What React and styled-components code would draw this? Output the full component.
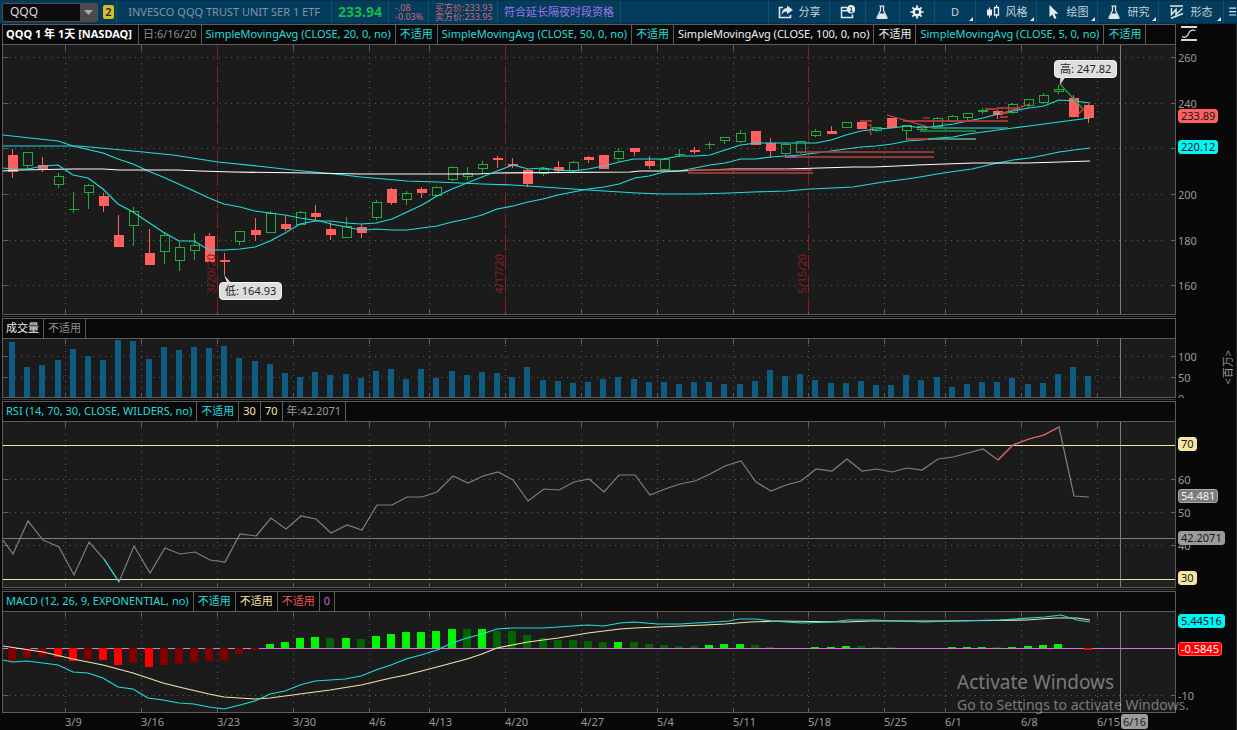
import React from "react";
import styled, { createGlobalStyle } from "styled-components";

const GlobalStyle = createGlobalStyle`
  * { box-sizing: border-box; }
  body {
    margin: 0;
    background: #080808;
    color: #9a9a9a;
    font-family: "Noto Sans", "Noto Sans CJK SC", sans-serif;
    font-size: 11px;
    line-height: 16px;
  }
  button, input { font: inherit; color: inherit; margin: 0; padding: 0; border: 0; background: none; }
`;

const PLOT_LEFT = 3;
const PLOT_WIDTH = 1172;
const BAR_COUNT = 72;
const barX = (i) => Math.round(13.15 + 15.155 * i);
const pct = (x) => `${((x - PLOT_LEFT) / PLOT_WIDTH) * 100}%`;

const WEEKS = [
  [65, "3/9"], [141, "3/16"], [217, "3/23"], [293, "3/30"], [369, "4/6"],
  [429, "4/13"], [505, "4/20"], [581, "4/27"], [657, "5/4"], [733, "5/11"],
  [808, "5/18"], [884, "5/25"], [945, "6/1"], [1021, "6/8"], [1097, "6/15"],
];
const CURSOR_X = 1120;

/* direction, high, body top, body bottom, low */
const CANDLES = [
  ["d", 149, 155, 172, 177], ["u", 152, 152, 165, 168], ["d", 157, 165, 169, 171],
  ["u", 173, 176, 184, 187], ["u", 192, 209, 209, 212], ["u", 184, 185, 192, 208],
  ["d", 193, 196, 206, 211], ["d", 215, 235, 247, 247], ["u", 207, 211, 225, 245],
  ["d", 229, 253, 265, 265], ["u", 232, 235, 251, 263], ["u", 242, 247, 260, 270],
  ["u", 233, 245, 250, 259], ["d", 233, 236, 262, 262], ["d", 253, 260, 262, 274],
  ["u", 231, 231, 241, 244], ["d", 218, 230, 235, 240], ["u", 211, 213, 232, 232],
  ["d", 216, 224, 229, 230], ["u", 211, 212, 224, 224], ["d", 205, 213, 217, 220],
  ["d", 222, 229, 235, 239], ["u", 217, 226, 237, 237], ["d", 224, 227, 233, 237],
  ["u", 200, 202, 217, 219], ["d", 188, 189, 203, 204], ["u", 191, 193, 199, 204],
  ["d", 187, 189, 193, 197], ["u", 186, 187, 195, 196], ["u", 166, 167, 179, 180],
  ["u", 167, 173, 176, 179], ["u", 161, 164, 168, 173], ["d", 156, 158, 160, 167],
  ["d", 158, 164, 166, 167], ["d", 169, 170, 184, 186], ["u", 167, 169, 173, 175],
  ["d", 161, 167, 171, 172], ["u", 161, 162, 170, 172], ["d", 156, 157, 160, 162],
  ["d", 155, 155, 169, 169], ["u", 148, 151, 158, 160], ["d", 148, 148, 152, 155],
  ["d", 156, 161, 166, 168], ["u", 158, 159, 169, 170], ["u", 149, 154, 154, 156],
  ["d", 147, 150, 152, 153], ["u", 142, 144, 144, 148], ["u", 137, 137, 140, 143],
  ["u", 130, 133, 141, 142], ["d", 131, 131, 145, 145], ["d", 138, 143, 151, 157],
  ["u", 143, 144, 153, 157], ["u", 141, 141, 152, 153], ["u", 129, 131, 135, 136],
  ["d", 126, 131, 134, 134], ["u", 122, 122, 127, 127], ["d", 122, 122, 129, 129],
  ["u", 127, 127, 130, 131], ["d", 118, 118, 128, 128], ["u", 125, 125, 130, 139],
  ["u", 126, 126, 129, 129], ["u", 117, 118, 126, 126], ["u", 115, 116, 121, 121],
  ["u", 113, 113, 117, 120], ["u", 108, 110, 111, 113], ["d", 110, 111, 115, 118],
  ["u", 103, 104, 112, 113], ["u", 99, 99, 105, 107], ["u", 93, 95, 102, 103],
  ["u", 85, 89, 91, 93], ["d", 95, 98, 117, 117], ["d", 104, 105, 118, 122],
];

const SMA20 = "3,135 30,138 58,141 73,146 103,153 118,159 133,164 148,171 163,177 194,191 209,198 224,204 240,207 255,211 270,213 285,215 300,218 320,221 331,224 346,227 361,230 376,229 392,230 407,230 422,228 437,226 452,222 467,219 482,215 497,209 513,206 528,202 543,199 558,195 573,192 588,189 604,187 619,184 635,178 649,176 664,172 679,171 695,168 710,165 725,163 741,159 756,159 770,157 786,156 801,155 816,153 831,151 846,149 861,147 876,146 892,144 907,141 922,140 938,138 953,137 968,134 983,132 998,130 1013,128 1029,126 1044,124 1059,122 1074,120 1090,118";
const SMA50 = "3,146 77,146 90,147 133,151 173,155 218,162 257,166 293,170 335,174 361,177 407,181 437,182 482,184 513,185 543,187 573,189 604,191 637,193 663,194 697,194 730,193 753,192 787,191 810,189 833,188 853,187 883,182 907,179 920,177 937,174 957,171 972,169 993,164 1013,160 1030,158 1045,155 1059,152 1074,150 1090,148";
const SMA100 = "3,171 20,170 73,169 87,169 103,169 120,170 177,170 200,171 233,172 310,173 360,174 477,174 497,173 630,172 640,171 680,171 733,169 787,169 820,168 853,167 873,167 897,166 917,165 973,163 1027,163 1060,162 1090,161";
const SMA5 = "3,168 13,169 28,169 43,166 58,165 73,175 88,178 103,189 118,204 133,212 148,222 163,232 179,241 194,241 209,250 224,250 240,249 255,247 270,241 285,233 300,224 315,221 331,221 346,223 361,224 376,223 392,219 407,212 422,205 437,196 452,189 467,183 482,177 497,171 513,165 528,169 543,168 558,170 573,171 588,169 604,166 619,162 634,159 649,159 664,159 679,156 695,156 710,155 725,150 741,145 756,143 816,143 831,140 846,135 861,131 876,129 892,128 907,126 922,128 938,126 953,124 968,121 983,118 998,114 1013,111 1029,108 1044,106 1059,100 1074,101 1090,103";

const VOLUME_TOPS = [
  342, 367, 365, 360, 349, 356, 360, 340, 341, 359, 347, 350, 347, 348, 346, 358,
  361, 364, 373, 377, 372, 375, 374, 378, 371, 369, 379, 369, 378, 371, 375, 372,
  373, 377, 367, 380, 381, 383, 382, 379, 377, 379, 382, 382, 384, 382, 382, 384,
  384, 381, 370, 376, 374, 380, 383, 383, 381, 385, 385, 375, 380, 377, 387, 384,
  382, 382, 378, 384, 383, 374, 367, 376,
];

const RSI = [
  554, 521, 540, 547, 575, 542, 559, 582, 546, 573, 548, 554, 552, 560, 562, 534,
  536, 518, 529, 516, 519, 533, 525, 530, 505, 505, 497, 497, 492, 476, 483, 476,
  472, 480, 501, 489, 490, 482, 479, 492, 475, 475, 495, 489, 484, 481, 474, 466,
  461, 482, 491, 485, 481, 469, 471, 459, 471, 469, 472, 468, 470, 459, 457, 453,
  449, 460, 445, 439, 435, 427, 496, 497,
];
const rsiPoints = (from, to) =>
  RSI.slice(from, to + 1).map((y, k) => `${barX(from + k)},${y}`).join(" ");

/* histogram end and whether the bar is growing */
const HISTOGRAM = [
  [661, 0], [658, 0], [657, 0], [657, 1], [661, 1], [659, 0], [660, 1], [665, 1],
  [663, 0], [667, 1], [665, 0], [664, 0], [662, 0], [661, 0], [660, 0], [654, 0],
  [650, 0], [644, 1], [642, 1], [638, 1], [637, 1], [638, 0], [638, 1], [639, 0],
  [636, 1], [634, 1], [632, 1], [632, 1], [631, 1], [629, 1], [629, 0], [629, 1],
  [631, 0], [631, 0], [635, 0], [638, 0], [640, 0], [640, 0], [641, 0], [642, 0],
  [642, 1], [642, 0], [644, 0], [645, 0], [646, 0], [646, 0], [645, 1], [644, 1],
  [644, 1], [645, 0], [647, 0], [648, 0], [648, 0], [647, 1], [647, 1], [646, 1],
  [646, 0], [647, 0], [647, 0], [648, 0], [648, 0], [648, 0], [647, 1], [647, 1],
  [647, 1], [647, 0], [647, 1], [646, 1], [645, 1], [644, 1], [648, 0], [650, 1],
];
const histColor = ([y, growing]) =>
  y > 648 ? (growing ? "#f00" : "#800000") : growing ? "#00f500" : "#006400";

const MACD = "3,660 12,662 27,661 43,663 58,665 73,672 88,673 103,678 118,687 133,689 148,698 163,700 179,703 194,704 209,707 224,709 240,705 255,701 270,694 285,691 300,685 315,681 330,680 345,679 361,676 376,670 391,665 406,659 421,655 437,650 452,643 467,638 482,634 497,629 512,628 543,628 573,626 588,625 604,626 620,623 634,622 658,624 680,624 695,623 715,622 729,621 739,619 756,619 772,621 802,623 833,622 847,620 873,620 925,622 948,621 1000,620 1045,617 1061,615 1077,620 1090,622";
const SIGNAL = "3,646 43,652 73,659 103,665 133,673 163,683 179,687 209,694 224,697 255,699 270,698 300,694 315,692 330,690 361,685 391,678 406,675 437,667 467,659 482,654 497,648 512,645 528,642 558,638 588,633 604,631 620,629 634,628 658,627 705,625 725,624 750,622 778,621 845,622 873,621 948,621 1027,620 1055,618 1077,618 1090,620";

/* ---------- toolbar ---------- */

const Toolbar = styled.header`
  display: flex;
  height: 24px;
  background: #033c5c;
  border-top: 1px solid #05324b;
  border-bottom: 1px solid #05324b;
  color: #c5d3da;
`;
const SymbolBox = styled.div`
  display: flex;
  align-items: center;
  gap: 5px;
  width: 117px;
  padding-left: 2px;
  border-right: 1px solid #1a4f6c;
`;
const Combo = styled.div`
  display: flex;
  width: 96px;
  height: 19px;
  border: 1px solid #4d4f50;
  border-radius: 2px;
  background: #0c0c0c;
  color: #dcdcdc;
  font-size: 12px;
`;
const SymbolInput = styled.input`
  flex: 1;
  min-width: 0;
  padding-left: 7px;
  outline: 0;
`;
const ComboButton = styled.button`
  display: grid;
  place-items: center;
  width: 17px;
  background: #4b4b4b;
`;
const LinkBadge = styled.button`
  width: 11px;
  height: 14px;
  border-radius: 2px;
  background: #d9bd22;
  color: #222;
  font-size: 11px;
  font-weight: 600;
  line-height: 14px;
`;
const Quote = styled.div`
  display: flex;
  flex-direction: column;
  justify-content: center;
  align-items: ${(p) => (p.$end ? "flex-end" : "flex-start")};
  padding: 0 ${(p) => (p.$end ? 11 : 6)}px;
  border-right: 1px solid #1a4f6c;
  font-size: ${(p) => p.$size || 11}px;
  font-weight: ${(p) => p.$weight || 400};
  line-height: ${(p) => (p.$size === 9 ? 9 : 16)}px;
  color: ${(p) => p.$color};
  white-space: nowrap;
  width: ${(p) => p.$width}px;
`;
const ToolGroup = styled.nav`
  display: flex;
  margin-left: auto;
`;
const Tool = styled.button`
  position: relative;
  display: flex;
  align-items: center;
  justify-content: center;
  gap: 6px;
  width: ${(p) => p.$width}px;
  border-left: 1px solid #1a4f6c;
  overflow: hidden;
  white-space: nowrap;
  &::after {
    content: "";
    display: ${(p) => (p.$menu ? "block" : "none")};
    position: absolute;
    right: 2px;
    bottom: 2px;
    border: 2px solid transparent;
    border-right-color: #e8eef1;
    border-bottom-color: #e8eef1;
  }
`;

function Icon({ name }) {
  const shapes = {
    share: (
      <>
        <path d="M5 2.5H1.5v10h11V10" fill="none" stroke="#dfe7eb" strokeWidth="1.6" />
        <path d="M9 0.5 15 5 9 9V6.6C6.5 6.5 5 7.6 3.6 10 3.8 6 5.6 3.3 9 3.1z" fill="#dfe7eb" />
      </>
    ),
    detach: (
      <>
        <path d="M7 2.6H1.5v9.9h11V9.5M1.5 5.8H7" fill="none" stroke="#dfe7eb" strokeWidth="1.5" />
        <circle cx="11" cy="4.3" r="4.3" fill="#e8eef1" />
        <path d="M10 2.7h1.3v4M9.7 6.7h3" fill="none" stroke="#033c5c" />
      </>
    ),
    flask: (
      <>
        <path d="M4.5 1.2h5M5.5 1.5v4L2 12.5q-.3 1 .7 1h8.6q1 0 .7-1L8.5 5.5v-4" fill="none" stroke="#dfe7eb" strokeWidth="1.2" />
        <path d="M4.5 8.5h5L11.5 13h-9z" fill="#dfe7eb" />
      </>
    ),
    gear: (
      <g fill="none" stroke="#e8eef1">
        <circle cx="7" cy="7" r="3.3" strokeWidth="2.4" />
        <path d="M7 0.3v3M7 10.7v3M0.3 7h3M10.7 7h3M2.3 2.3l2 2M9.7 9.7l2 2M2.3 11.7l2-2M9.7 4.3l2-2" strokeWidth="1.7" />
      </g>
    ),
    candles: (
      <>
        <path d="M4.5 2.5v10" stroke="#e8eef1" />
        <path d="M2 4.5h5v6H2z" fill="#e8eef1" />
        <path d="M11.5 0v2.5M11.5 10v3" stroke="#e8eef1" />
        <path d="M9.5 2.5h4V10h-4z" fill="none" stroke="#e8eef1" strokeWidth="1.3" />
      </>
    ),
    cursor: <path d="M3.5 0v12l2.8-2.5 2.2 4.5 2-1-2.1-4.3h4z" fill="#e8eef1" />,
    pattern: (
      <g fill="none" stroke="#dfe7eb" strokeWidth="1.5">
        <path d="M0 1h13M1 13.3 13 8.5" />
        <path d="M1.5 3v6.5l4.5-5v5l6.500-6" />
      </g>
    ),
    list: <path d="M6 2.5h8M6 6.5h8M6 10.5h8" stroke="#dfe7eb" strokeWidth="1.3" />,
  };
  return (
    <svg width="15" height="14" viewBox="0 0 15 14" aria-hidden="true">
      {shapes[name]}
    </svg>
  );
}

/* ---------- panels ---------- */

const Page = styled.div`
  position: relative;
  min-height: 100vh;
  background: #080808;
`;
const Body = styled.main`
  display: flex;
  flex-direction: column;
  gap: 3px;
  padding-left: 2px;
  border-right: 1px solid #2d2d2d;
`;
const PanelRow = styled.section`
  display: grid;
  grid-template-columns: minmax(0, 1fr) 60px;
`;
const PanelBox = styled.div`
  position: relative;
  border: 1px solid #5c5c5c;
  &::after {
    content: "";
    display: ${(p) => (p.$last ? "none" : "block")};
    position: absolute;
    left: -1px;
    right: -1px;
    bottom: -3px;
    height: 1px;
    background: #3c3c3c;
  }
`;
const Legend = styled.div`
  display: flex;
  height: 20px;
  border-bottom: 1px solid #5c5c5c;
  background: #090909;
  overflow: hidden;
`;
const Chip = styled.span`
  padding: 1px ${(p) => (p.$bold ? 6 : 4)}px 0 ${(p) => (p.$first ? 3 : 4)}px;
  border-right: 1px solid #5c5c5c;
  color: ${(p) => p.$color};
  font-weight: ${(p) => (p.$bold ? 700 : 400)};
  white-space: nowrap;
`;
const Plot = styled.div`
  position: relative;
  height: ${(p) => p.$height}px;
  background: #1b1b1b;
  & > svg { display: block; width: 100%; height: 100%; }
`;
const Axis = styled.div`
  position: relative;
  overflow: hidden;
`;
const AxisLabel = styled.span`
  position: absolute;
  left: 2px;
  line-height: 14px;
  margin-top: -7px;
`;
const AxisTag = styled.span`
  position: absolute;
  left: 2px;
  height: 14px;
  margin-top: -7px;
  padding: 0 2px;
  border: 1px solid ${(p) => p.$edge || p.$bg};
  border-radius: 3px;
  background: ${(p) => p.$bg};
  color: ${(p) => p.$color || "#161616"};
  line-height: 12px;
`;
const AxisUnit = styled.span`
  position: absolute;
  right: 1px;
  top: 32px;
  writing-mode: vertical-rl;
  text-orientation: sideways;
  transform: rotate(180deg);
  line-height: 14px;
`;
const ScaleButton = styled.button`
  display: block;
  margin: 2px 0 0 5px;
  height: 17px;
`;
const Callout = styled.div`
  position: absolute;
  padding: 0 5px;
  border: 1px solid #f2f2f2;
  border-radius: 4px;
  background: #dedede;
  color: #222;
  line-height: 16px;
  white-space: nowrap;
  &::after {
    content: "";
    position: absolute;
    left: 4px;
    ${(p) => (p.$below ? "bottom: 100%;" : "top: 100%;")}
    width: 8px;
    height: 8px;
    background: #dedede;
    clip-path: ${(p) => (p.$below ? "polygon(0 0, 40% 100%, 90% 100%)" : "polygon(20% 0, 80% 0, 10% 100%)")};
  }
`;
const ExpiryLabel = styled.span`
  position: absolute;
  bottom: 20px;
  margin-left: -13px;
  writing-mode: vertical-rl;
  transform: rotate(180deg);
  color: #8c1c1c;
  line-height: 14px;
`;
const DateAxis = styled.div`
  position: relative;
  height: 17px;
  margin: -3px 61px 0 1px;
`;
const DateLabel = styled.span`
  position: absolute;
  top: 1px;
`;
const DateTag = styled(DateLabel)`
  height: 15px;
  padding: 0 2px;
  border-radius: 3px;
  background: #9b9b9b;
  color: #1a1a1a;
  line-height: 15px;
`;
const Watermark = styled.aside`
  position: absolute;
  right: 48px;
  bottom: 15px;
  color: rgba(205, 205, 205, 0.55);
  font-size: 14px;
  line-height: 20px;
  white-space: nowrap;
  pointer-events: none;
`;
const WatermarkTitle = styled.strong`
  display: block;
  font-size: 19px;
  font-weight: 400;
  line-height: 26px;
`;

function Grid({ top, height, rows }) {
  const bottom = top + height;
  const right = PLOT_LEFT + PLOT_WIDTH;
  return (
    <g stroke="#5e5e5e" shapeRendering="crispEdges">
      {WEEKS.map(([x]) => (
        <g key={x}>
          <path d={`M${x + 0.5} ${top}V${bottom}`} strokeDasharray="1 5" />
          <path d={`M${x + 0.5} ${top}v5M${x + 0.5} ${bottom - 4}v4`} />
        </g>
      ))}
      {rows.map((y) => (
        <g key={y}>
          <path d={`M${PLOT_LEFT} ${y + 0.5}H1162`} strokeDasharray="1 5" />
          <path d={`M${PLOT_LEFT} ${y + 0.5}h5M${right - 4} ${y + 0.5}h4`} />
        </g>
      ))}
      <path d={`M${CURSOR_X + 0.5} ${top}V${bottom}`} stroke="#7d7d7d" />
    </g>
  );
}

function PlotSvg({ top, height, rows, label, children }) {
  return (
    <svg
      viewBox={`${PLOT_LEFT} ${top} ${PLOT_WIDTH} ${height}`}
      preserveAspectRatio="none"
      role="img"
      aria-label={label}
    >
      <Grid top={top} height={height} rows={rows} />
      {children}
    </svg>
  );
}

function Candle({ index, data: [dir, high, top, bottom, low] }) {
  const x = barX(index) - 5;
  const up = dir === "u";
  const color = up ? "#1fae3c" : "#ff5f5f";
  return (
    <g shapeRendering="crispEdges">
      {high < top && <rect x={x + 4} y={high} width="1" height={top - high} fill={color} />}
      {low > bottom && <rect x={x + 4} y={bottom} width="1" height={low - bottom + 1} fill={color} />}
      {up && bottom > top ? (
        <rect x={x + 0.5} y={top + 0.5} width="9" height={bottom - top} fill="none" stroke={color} />
      ) : (
        <rect x={x} y={top} width="10" height={Math.max(1, bottom - top)} fill={color} />
      )}
    </g>
  );
}

const CYAN = "#22dcdc";
const NA = "不适用";

const PRICE_LEGEND = [
  ["QQQ 1 年 1天 [NASDAQ]", "#fff", true],
  ["日:6/16/20", "#8f8f8f"],
  ["SimpleMovingAvg (CLOSE, 20, 0, no)", CYAN],
  [NA, CYAN],
  ["SimpleMovingAvg (CLOSE, 50, 0, no)", CYAN],
  [NA, CYAN],
  ["SimpleMovingAvg (CLOSE, 100, 0, no)", "#f0f0f0"],
  [NA, "#f0f0f0"],
  ["SimpleMovingAvg (CLOSE, 5, 0, no)", CYAN],
  [NA, CYAN],
];
const VOLUME_LEGEND = [["成交量", "#f0f0f0"], [NA, "#8f8f8f"]];
const RSI_LEGEND = [
  ["RSI (14, 70, 30, CLOSE, WILDERS, no)", CYAN],
  [NA, CYAN],
  ["30", "#f3e6a4"],
  ["70", "#f3e6a4"],
  ["年:42.2071", "#9a9a9a"],
];
const MACD_LEGEND = [
  ["MACD (12, 26, 9, EXPONENTIAL, no)", CYAN],
  [NA, CYAN],
  [NA, "#f3e6a4"],
  [NA, "#ef5656"],
  ["0", "#d35fe0"],
];

function Panel({ legend, height, axis, children, last }) {
  return (
    <PanelRow>
      <PanelBox $last={last}>
        <Legend>
          {legend.map(([text, color, bold], i) => (
            <Chip key={i} $color={color} $bold={bold} $first={i === 0}>{text}</Chip>
          ))}
        </Legend>
        <Plot $height={height}>{children}</Plot>
      </PanelBox>
      <Axis>{axis}</Axis>
    </PanelRow>
  );
}

const TOOLS = [
  ["share", "分享", 61, false],
  ["detach", "", 36, false],
  ["flask", "", 34, false],
  ["gear", "", 35, false],
  [null, "D", 41, true],
  ["candles", "风格", 61, true],
  ["cursor", "绘图", 61, true],
  ["flask", "研究", 61, true],
  ["pattern", "形态", 65, true],
  ["list", "", 14, false],
];
const TOOL_NAMES = { detach: "detach", flask: "studies", gear: "settings", list: "menu" };

export default function App() {
  return (
    <Page>
      <GlobalStyle />
      <Toolbar>
        <SymbolBox>
          <Combo>
            <SymbolInput aria-label="symbol" defaultValue="QQQ" />
            <ComboButton aria-label="symbols">
              <svg width="9" height="5" viewBox="0 0 9 5"><path d="M0 0h9L4.5 5z" fill="#a8a8a8" /></svg>
            </ComboButton>
          </Combo>
          <LinkBadge>2</LinkBadge>
        </SymbolBox>
        <Quote $color="#8095a3" $width={215} $end>INVESCO QQQ TRUST UNIT SER 1 ETF</Quote>
        <Quote $color="#19b84a" $size={14} $weight={700} $width={57}>233.94</Quote>
        <Quote $color="#cf6879" $size={9} $width={40}><span>-.08</span><span>-0.03%</span></Quote>
        <Quote $color="#cf6879" $size={9} $width={69}><span>买方价:233.93</span><span>卖方价:233.95</span></Quote>
        <Quote $color="#a273e6" $width={123}>符合延长隔夜时段资格</Quote>
        <ToolGroup>
          {TOOLS.map(([icon, text, width, menu], i) => (
            <Tool key={i} $width={width} $menu={menu} aria-label={text || TOOL_NAMES[icon]}>
              {icon && <Icon name={icon} />}
              {text}
            </Tool>
          ))}
        </ToolGroup>
      </Toolbar>

      <Body>
        <Panel
          legend={PRICE_LEGEND}
          height={269}
          axis={
            <>
              <ScaleButton aria-label="scale">
                <svg width="17" height="16" viewBox="0 0 17 16" fill="none" stroke="#d8d8d8">
                  <path d="M0 1h16M0 14h16" strokeWidth="2" />
                  <path d="M1 10.500c2 1.500 4.500 1 6-2s3-5.500 7.500-4" strokeWidth="1.3" />
                </svg>
              </ScaleButton>
              {[[34, 260], [80, 240], [171, 200], [217, 180], [262, 160]].map(([y, v]) => (
                <AxisLabel key={v} style={{ top: y }}>{v}</AxisLabel>
              ))}
              <AxisTag $bg="#ff5f5f" style={{ top: 92 }}>233.89</AxisTag>
              <AxisTag $bg="#00f5f5" style={{ top: 123 }}>220.12</AxisTag>
            </>
          }
        >
          <PlotSvg top={45} height={269} rows={[57, 103, 148, 194, 240, 285]} label="QQQ price">
            <g stroke="#8e1a1a" strokeDasharray="15 3 1 2" shapeRendering="crispEdges">
              <path d="M217.5 45V314" />
              <path d="M505.5 45V314" />
              <path d="M808.5 45V314" />
            </g>
            {CANDLES.map((c, i) => <Candle key={i} index={i} data={c} />)}
            <g fill="none" strokeWidth="1.2">
              <polyline points={SMA20} stroke={CYAN} />
              <polyline points={SMA50} stroke={CYAN} />
              <polyline points={SMA100} stroke="#fff" />
              <polyline points={SMA5} stroke={CYAN} />
            </g>
            <g strokeWidth="2" fill="none" opacity=".8">
              <path d="M688 170h124M688 173h125M797 152h137M788 157h146" stroke="#a84040" />
              <path d="M785 157h12" stroke="#b05fc0" />
              <path d="M903 121h105M985 109h13M997 108h23M860 121h12M1000 113h8M1000 117h8M907 139h21" stroke="#c23c3c" />
              <path d="M920 131h56" stroke="#129a2c" />
              <path d="M932 128h76" stroke="#2c9aa0" />
              <path d="M928 139h48" stroke="#4fae86" />
            </g>
            <g strokeWidth="1.2" fill="none">
              <path d="M865 125h6v3l-1 3 1 4M923 118h7M887 115 932 128M1003 113l27-9M1077 115l7-6" stroke="#d44848" />
              <path d="M1060 84 1083 109" stroke="#2e9e3c" />
            </g>
          </PlotSvg>
          <ExpiryLabel style={{ left: pct(217) }}>3/20/20</ExpiryLabel>
          <ExpiryLabel style={{ left: pct(505) }}>4/17/20</ExpiryLabel>
          <ExpiryLabel style={{ left: pct(808) }}>5/15/20</ExpiryLabel>
          <Callout style={{ left: pct(1054), top: 15 }}>高: 247.82</Callout>
          <Callout $below style={{ left: pct(219), top: 237 }}>低: 164.93</Callout>
        </Panel>

        <Panel
          legend={VOLUME_LEGEND}
          height={58}
          axis={
            <>
              {[[39, 100], [60, 50], [81, 0]].map(([y, v]) => (
                <AxisLabel key={v} style={{ top: y }}>{v}</AxisLabel>
              ))}
              <AxisUnit>&lt;百万&gt;</AxisUnit>
            </>
          }
        >
          <PlotSvg top={339} height={58} rows={[356, 377]} label="Volume">
            <g fill="#0d5c82" shapeRendering="crispEdges">
              {VOLUME_TOPS.map((y, i) => (
                <rect key={i} x={barX(i) - 4} y={y} width="6" height={397 - y} />
              ))}
            </g>
          </PlotSvg>
        </Panel>

        <Panel
          legend={RSI_LEGEND}
          height={165}
          axis={
            <>
              {[[79, 60], [112, 50], [145, 40]].map(([y, v]) => (
                <AxisLabel key={v} style={{ top: y }}>{v}</AxisLabel>
              ))}
              <AxisTag $bg="#f5e6a3" style={{ top: 43 }}>70</AxisTag>
              <AxisTag $bg="#7b7b7b" $edge="#a8a8a8" $color="#f2f2f2" style={{ top: 95 }}>54.481</AxisTag>
              <AxisTag $bg="#9b9b9b" style={{ top: 137 }}>42.2071</AxisTag>
              <AxisTag $bg="#f5e6a3" style={{ top: 177 }}>30</AxisTag>
            </>
          }
        >
          <PlotSvg top={422} height={165} rows={[479, 512, 545]} label="RSI">
            <g shapeRendering="crispEdges">
              <path d="M3 580h1172v7H3z" fill="#80c060" fillOpacity=".04" />
              <path d="M3 538.5h1172" stroke="#7d7d7d" />
              <path d="M3 445.5h1172M3 579.5h1172" stroke="#f5e6a3" />
            </g>
            <g fill="none" strokeWidth="1.2">
              <polyline points={`3,540 ${rsiPoints(0, BAR_COUNT - 1)}`} stroke="#7f7f7f" />
              <polyline points={rsiPoints(6, 7)} stroke={CYAN} />
              <polyline points={rsiPoints(65, 69)} stroke="#ef5656" />
            </g>
          </PlotSvg>
        </Panel>

        <Panel
          last
          legend={MACD_LEGEND}
          height={100}
          axis={
            <>
              <AxisTag $bg="#00f5f5" style={{ top: 30 }}>5.44516</AxisTag>
              <AxisTag $bg="#f00" $edge="#ff5a5a" $color="#fff" style={{ top: 58 }}>-0.5845</AxisTag>
              <AxisLabel style={{ top: 105 }}>-10</AxisLabel>
            </>
          }
        >
          <PlotSvg top={612} height={100} rows={[695]} label="MACD">
            <g shapeRendering="crispEdges">
              <path d="M3 648.5h1172" stroke="#d878dc" />
              {HISTOGRAM.map((bar, i) => (
                <rect
                  key={i}
                  x={barX(i) - 5}
                  y={Math.min(bar[0], 648)}
                  width="8"
                  height={Math.abs(bar[0] - 648)}
                  fill={histColor(bar)}
                />
              ))}
            </g>
            <g fill="none" strokeWidth="1.2">
              <polyline points={SIGNAL} stroke="#f3e3b0" />
              <polyline points={MACD} stroke={CYAN} />
            </g>
          </PlotSvg>
        </Panel>

        <DateAxis>
          {WEEKS.map(([x, text]) => (
            <DateLabel key={x} style={{ left: pct(x) }}>{text}</DateLabel>
          ))}
          <DateTag style={{ left: pct(CURSOR_X + 1) }}>6/16</DateTag>
        </DateAxis>
      </Body>

      <Watermark>
        <WatermarkTitle>Activate Windows</WatermarkTitle>
        Go to Settings to activate Windows.
      </Watermark>
    </Page>
  );
}
